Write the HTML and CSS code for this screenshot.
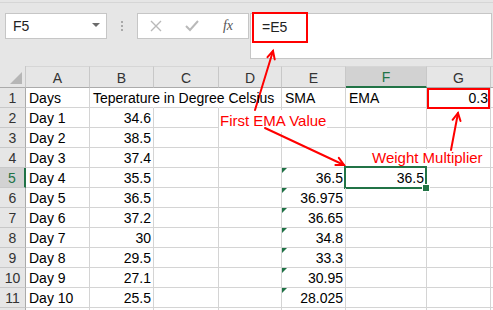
FILE: index.html
```html
<!DOCTYPE html>
<html lang="en">
<head>
    <meta charset="UTF-8">
    <meta name="viewport" content="width=device-width, initial-scale=1.0">
    <title>EMA sheet</title>
    <link rel="stylesheet" href="styles.css">
</head>
<body>
    <div class="app">
        <div class="topbar">
            <div class="namebox"><span>F5</span><span class="caret"></span></div>
            <div class="grip"><i></i><i></i><i></i></div>
            <div class="fxbtns">
                <svg width="12" height="12" viewBox="0 0 12 12"><path d="M1 1 L11 11 M11 1 L1 11" stroke="#b9b9b9" stroke-width="1.4" fill="none"/></svg>
                <svg width="14" height="12" viewBox="0 0 14 12"><path d="M1 6 L5 10 L13 1" stroke="#b9b9b9" stroke-width="2" fill="none"/></svg>
                <span class="fx">fx</span>
            </div>
            <div class="formula">=E5</div>
        </div>

        <div class="sheet">
            <div class="corner"></div><div class="ch">A</div><div class="ch">B</div><div class="ch">C</div><div class="ch">D</div><div class="ch">E</div><div class="ch ch-sel">F</div><div class="ch">G</div><div class="ch"></div>

            <div class="rh">1</div><div class="c">Days</div><div class="c spill">Teperature in Degree Celsius</div><div class="c spill"></div><div class="c"></div><div class="c">SMA</div><div class="c">EMA</div><div class="c n">0.3</div><div class="c"></div>
            <div class="rh">2</div><div class="c">Day 1</div><div class="c n">34.6</div><div class="c"></div><div class="c"></div><div class="c"></div><div class="c"></div><div class="c"></div><div class="c"></div>
            <div class="rh">3</div><div class="c">Day 2</div><div class="c n">38.5</div><div class="c"></div><div class="c"></div><div class="c"></div><div class="c"></div><div class="c"></div><div class="c"></div>
            <div class="rh">4</div><div class="c">Day 3</div><div class="c n">37.4</div><div class="c"></div><div class="c"></div><div class="c"></div><div class="c"></div><div class="c"></div><div class="c"></div>
            <div class="rh rh-sel">5</div><div class="c">Day 4</div><div class="c n">35.5</div><div class="c"></div><div class="c"></div><div class="c n flag">36.5</div><div class="c n sel">36.5</div><div class="c"></div><div class="c"></div>
            <div class="rh">6</div><div class="c">Day 5</div><div class="c n">36.5</div><div class="c"></div><div class="c"></div><div class="c n flag">36.975</div><div class="c"></div><div class="c"></div><div class="c"></div>
            <div class="rh">7</div><div class="c">Day 6</div><div class="c n">37.2</div><div class="c"></div><div class="c"></div><div class="c n flag">36.65</div><div class="c"></div><div class="c"></div><div class="c"></div>
            <div class="rh">8</div><div class="c">Day 7</div><div class="c n">30</div><div class="c"></div><div class="c"></div><div class="c n flag">34.8</div><div class="c"></div><div class="c"></div><div class="c"></div>
            <div class="rh">9</div><div class="c">Day 8</div><div class="c n">29.5</div><div class="c"></div><div class="c"></div><div class="c n flag">33.3</div><div class="c"></div><div class="c"></div><div class="c"></div>
            <div class="rh">10</div><div class="c">Day 9</div><div class="c n">27.1</div><div class="c"></div><div class="c"></div><div class="c n flag">30.95</div><div class="c"></div><div class="c"></div><div class="c"></div>
            <div class="rh">11</div><div class="c">Day 10</div><div class="c n">25.5</div><div class="c"></div><div class="c"></div><div class="c n flag">28.025</div><div class="c"></div><div class="c"></div><div class="c"></div>
            <div class="rh"></div><div class="c"></div><div class="c"></div><div class="c"></div><div class="c"></div><div class="c"></div><div class="c"></div><div class="c"></div><div class="c"></div>
        </div>

        <!-- annotations drawn over the sheet -->
        <div class="note note-first">First EMA Value</div>
        <div class="note note-weight">Weight Multiplier</div>
        <div class="mark mark-formula"></div>
        <div class="mark mark-g1"></div>
        <svg class="arrows" width="493" height="310" viewBox="0 0 493 310">
            <g stroke="#ff0000" stroke-width="2" fill="none" stroke-linecap="round">
                <path d="M255 110 L273 51"/>
                <path d="M267.5 57.2 L273 51 L274.7 59.4"/>
                <path d="M265 128 L344 165"/>
                <path d="M338.8 157.8 L344 165 L335.4 164.9"/>
                <path d="M451 150 L458 113"/>
                <path d="M452.6 119.8 L458 113 L460.5 121"/>
            </g>
        </svg>
    </div>
</body>
</html>
```

FILE: styles.css
```css
* {
    padding: 0;
    margin: 0;
    box-sizing: border-box;
}
body {
    background-color: #e6e6e6;
    font-family: "Liberation Sans", Arial, sans-serif;
    overflow: hidden;
}
.app {
    width: 493px;
    height: 310px;
    position: relative;
    overflow: hidden;
    background-color: #e6e6e6;
}

/* formula bar */
.topbar {
    margin-top: 2px;
    border-top: 1px solid #d6d6d6;
    height: 64px;
    padding: 10px 0 0 5px;
    display: flex;
    align-items: flex-start;
}
.namebox {
    width: 102px;
    height: 26px;
    background-color: #fff;
    border: 1px solid #c6c6c6;
    display: flex;
    align-items: center;
    justify-content: space-between;
    padding: 0 6px 0 7px;
    font-size: 14px;
    color: #222;
}
.caret {
    width: 0;
    height: 0;
    border-left: 4px solid transparent;
    border-right: 4px solid transparent;
    border-top: 4px solid #6b6b6b;
    margin-top: -2px;
}
.grip {
    width: 30px;
    height: 26px;
    display: flex;
    flex-direction: column;
    align-items: center;
    justify-content: center;
    gap: 2px;
}
.grip i {
    display: block;
    width: 2px;
    height: 2px;
    background-color: #a9a9a9;
}
.fxbtns {
    width: 112px;
    height: 26px;
    background-color: #fff;
    border: 1px solid #c6c6c6;
    display: grid;
    grid-template-columns: 36px 36px 36px;
    align-items: center;
    justify-items: center;
}
.fx {
    font-family: "Liberation Serif", serif;
    font-style: italic;
    font-size: 14px;
    color: #555;
}
.formula {
    margin-left: 1px;
    width: 242px;
    height: 46px;
    background-color: #fff;
    border: 1px solid #c6c6c6;
    font-size: 14px;
    padding: 5px 0 0 11px;
    color: #222;
}

/* grid */
.sheet {
    display: grid;
    grid-template-columns: 26px 64px 64px 65px 63px 64px 81px 64px 1fr;
    grid-template-rows: 22px;
    grid-auto-rows: 20px;
    background-color: #fff;
}
.corner,
.ch,
.rh {
    background-color: #e6e6e6;
    border-right: 1px solid #c8c8c8;
    border-bottom: 1px solid #c8c8c8;
    font-size: 14px;
    color: #333;
    text-align: center;
}
.corner {
    position: relative;
    border-bottom-color: #ababab;
}
.corner::after {
    content: "";
    position: absolute;
    right: 3px;
    bottom: 3px;
    border-left: 12px solid transparent;
    border-bottom: 12px solid #b6b6b6;
}
.ch {
    line-height: 20px;
    padding-top: 1px;
    border-top: 1px solid #d6d6d6;
    border-bottom-color: #ababab;
}
.ch-sel {
    background-color: #d2d2d2;
    color: #217346;
    border-bottom: 2px solid #217346;
    line-height: 19px;
}
.rh {
    line-height: 19px;
    padding-top: 1px;
    border-right-color: #ababab;
}
.rh-sel {
    background-color: #d2d2d2;
    color: #217346;
    border-right: 2px solid #217346;
}
.c {
    border-right: 1px solid #d4d4d4;
    border-bottom: 1px solid #d4d4d4;
    font-size: 14px;
    line-height: 19px;
    padding: 1px 2px 0 3px;
    white-space: nowrap;
    overflow: hidden;
    color: #000;
    position: relative;
}
.c.n {
    text-align: right;
}
.spill {
    overflow: visible;
    border-right-color: transparent;
    z-index: 1;
}
.flag::before {
    content: "";
    position: absolute;
    left: 0;
    top: 0;
    border-top: 5px solid #1e7145;
    border-right: 5px solid transparent;
}
.sel {
    overflow: visible;
}
.sel::after {
    content: "";
    position: absolute;
    left: -2px;
    top: -2px;
    right: -1px;
    bottom: -2px;
    border: 2px solid #217346;
}
.sel::before {
    content: "";
    position: absolute;
    right: -4px;
    bottom: -5px;
    width: 6px;
    height: 6px;
    background-color: #217346;
    border: 1px solid #fff;
    z-index: 2;
}

/* red callouts */
.mark {
    position: absolute;
    border: 2px solid #ff0000;
}
.mark-formula {
    left: 252px;
    top: 12px;
    width: 56px;
    height: 31px;
}
.mark-g1 {
    left: 427px;
    top: 88px;
    width: 63px;
    height: 21px;
}
.arrows {
    position: absolute;
    left: 0;
    top: 0;
    pointer-events: none;
}
.note {
    position: absolute;
    color: #ff0000;
    background-color: #fff;
    font-size: 15px;
    line-height: 17px;
    padding: 2px 1px 3px;
    white-space: nowrap;
}
.note-first {
    left: 219px;
    top: 110px;
}
.note-weight {
    left: 371px;
    top: 149px;
    padding: 0 1px;
}
```
